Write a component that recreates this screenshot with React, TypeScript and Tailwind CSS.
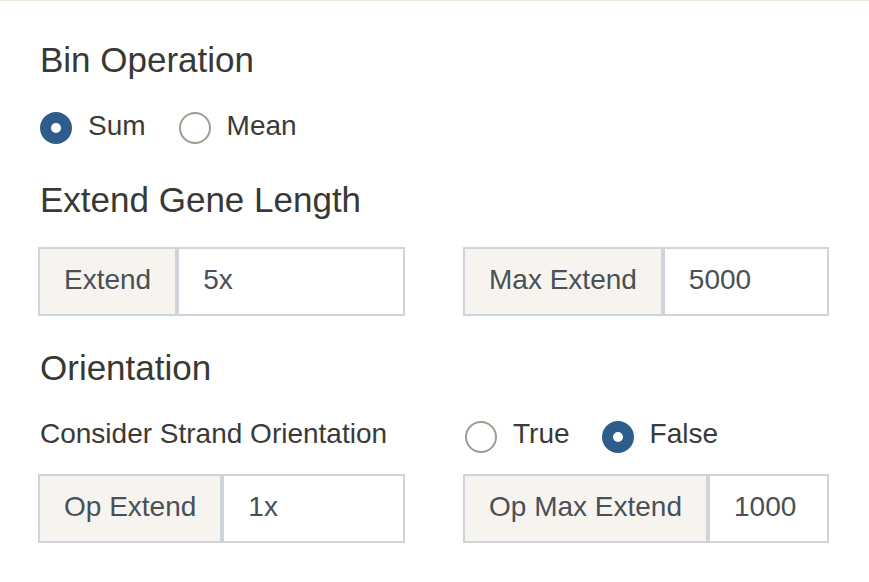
import { useState } from "react";

interface RadioProps {
  label: string;
  checked: boolean;
  onSelect: () => void;
}

function Radio({ label, checked, onSelect }: RadioProps) {
  return (
    <label className="flex items-center gap-4 cursor-pointer" onClick={onSelect}>
      <span
        className={
          checked
            ? "ml-[2px] w-8 h-8 rounded-full bg-white border-[11px] border-[#2e5d8c]"
            : "ml-[2px] w-8 h-8 rounded-full bg-white border-2 border-[#9d9c8f]"
        }
      />
      <span className="pb-[5px] text-[28px] leading-[28px] text-[#3a3a36]">{label}</span>
    </label>
  );
}

interface InputGroupProps {
  addon: string;
  value: string;
}

function InputGroup({ addon, value }: InputGroupProps) {
  return (
    <div className="flex h-[69px] text-[28px] leading-[28px] text-[#495057]">
      <span className="flex items-center pb-1 px-6 bg-[#f7f4ef] border-2 border-[#ced4da] whitespace-nowrap">
        {addon}
      </span>
      <input
        className="flex-1 min-w-0 h-full pb-1 px-6 bg-white border-2 border-l-2 border-[#ced4da] outline-none text-[#495057]"
        defaultValue={value}
      />
    </div>
  );
}

export default function App() {
  const [binOp, setBinOp] = useState("sum");
  const [strand, setStrand] = useState(false);

  return (
    <div
      className="w-[869px] h-[582px] bg-white border-t border-[#ece6da] pl-[38px] pt-[41px]"
      style={{ fontFamily: '"Liberation Sans", Arial, sans-serif' }}
    >
      {/* Bin operation */}
      <h2 className="pl-[2px] text-[35px] leading-[35px] font-normal text-[#383834]">Bin Operation</h2>
      <div className="mt-[35px] h-8 flex items-center gap-x-[31px]">
        <Radio label="Sum" checked={binOp === "sum"} onSelect={() => setBinOp("sum")} />
        <Radio label="Mean" checked={binOp === "mean"} onSelect={() => setBinOp("mean")} />
      </div>

      {/* Extend gene length */}
      <h2 className="mt-[38px] pl-[2px] text-[35px] leading-[35px] font-normal text-[#383834]">Extend Gene Length</h2>
      <div className="mt-[30px] grid grid-cols-[367px_366px] gap-x-[58px]">
        <InputGroup addon="Extend" value="5x" />
        <InputGroup addon="Max Extend" value="5000" />
      </div>

      {/* Orientation */}
      <h2 className="mt-[34px] pl-[2px] text-[35px] leading-[35px] font-normal text-[#383834]">Orientation</h2>
      <div className="mt-[35px] h-8 grid grid-cols-[367px_366px] gap-x-[58px] items-center">
        <span className="pl-[2px] pb-[5px] text-[28px] leading-[28px] text-[#3a3a36]">Consider Strand Orientation</span>
        <div className="flex items-center gap-x-[30px]">
          <Radio label="True" checked={strand} onSelect={() => setStrand(true)} />
          <Radio label="False" checked={!strand} onSelect={() => setStrand(false)} />
        </div>
      </div>
      <div className="mt-[22px] grid grid-cols-[367px_366px] gap-x-[58px]">
        <InputGroup addon="Op Extend" value="1x" />
        <InputGroup addon="Op Max Extend" value="1000" />
      </div>
    </div>
  );
}
